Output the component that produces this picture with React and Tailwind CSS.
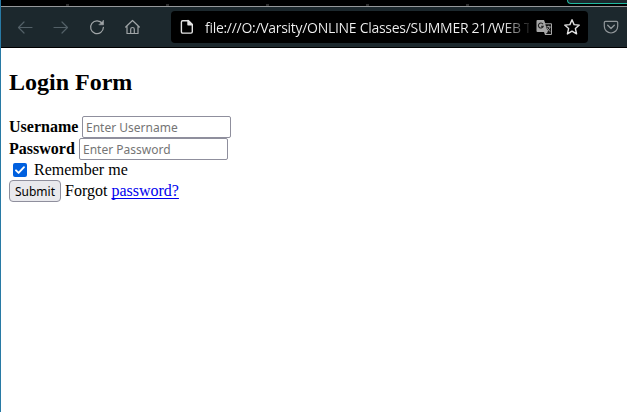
import React from "react";

function NavIcon({ children, className }) {
  return (
    <svg width="18" height="18" viewBox="0 0 18 18" fill="none" stroke="currentColor" strokeWidth="1.2" strokeLinecap="round" strokeLinejoin="round" className={`shrink-0 ${className}`}>
      {children}
    </svg>
  );
}

function Toolbar() {
  return (
    <div className="flex h-[40px] items-center bg-[#1c282d] font-['Open_Sans',sans-serif]">
      <NavIcon className="ml-[15px] text-[#536067]">
        <path d="M16 9.500H2.500M8 4 2.500 9.500 8 15" />
      </NavIcon>
      <NavIcon className="ml-[18px] text-[#536067]">
        <path d="M2 9.500h13.500M10 4l5.500 5.500L10 15" />
      </NavIcon>
      <NavIcon className="ml-[18px] text-[#a0a5a7]">
        <path d="M14.300 5.700A6.400 6.400 0 1 0 15.400 9.300" />
        <path d="M15.500 2.500v4.300h-4.300z" fill="currentColor" strokeWidth="0.6" />
      </NavIcon>
      <NavIcon className="ml-[18px] text-[#a0a5a7]">
        <path d="M1.700 9 8.500 2.500 15.300 9M3 8v7.500h11V8M6.700 15.500v-4.300c0-1.200.7-1.700 1.800-1.700s1.800.5 1.800 1.700v4.300" />
      </NavIcon>
      <div className="ml-[29px] flex h-8 w-[417px] shrink-0 items-center rounded bg-black">
        <svg width="14" height="16" viewBox="0 0 14 16" fill="none" stroke="#e4e4e4" strokeWidth="1.4" strokeLinejoin="round" className="ml-[9px] shrink-0">
          <path d="M2.700 1.700h5.800L12.300 5.500v7.300c0 .8-.5 1.300-1.300 1.300H2.700c-.8 0-1.300-.5-1.300-1.300V3c0-.8.500-1.300 1.300-1.300z" />
          <path d="M8 1.500v4.300h4.300z" fill="#e4e4e4" />
        </svg>
        <div className="mt-[2px] ml-[11px] w-[324px] shrink-0 bg-gradient-to-r from-[#f2f2f2] from-92% to-[#222222] to-100% bg-clip-text text-[14px] leading-5 tracking-[-0.29px] whitespace-nowrap text-transparent">
          file:///O:/Varsity/ONLINE Classes/SUMMER 21/WEB T
        </div>
        <svg width="17" height="17" viewBox="0 0 17 17" className="ml-[7px] shrink-0">
          <path d="M1.500 1H8l1.200 3.300H15a1 1 0 0 1 1 1v9.700a1 1 0 0 1-1 1H9l-1-3H1.500a1 1 0 0 1-1-1V2a1 1 0 0 1 1-1z" fill="#a7a7a7" />
          <path d="M9.300 5.200H15v9.900H9.800l2-2.200z" fill="#101010" />
          <path d="M7 5.200A2.500 2.500 0 1 0 7.300 7.200H5" fill="none" stroke="#222" strokeWidth="1.1" />
          <path d="M10.500 7.800h4M12.500 6.800v1M14 8c-.4 2-1.500 3-3 4M11.300 9.200c.7 1.500 1.600 2.500 3 3" fill="none" stroke="#aaa" />
        </svg>
        <svg width="18" height="18" viewBox="0 0 18 18" fill="none" stroke="#e2e2e2" strokeWidth="1.4" strokeLinejoin="round" className="ml-[10px] shrink-0">
          <path d="m9 1.700 2.100 4.900 5.200.5-3.900 3.500 1.200 5.300L9 13.100l-4.600 2.800 1.200-5.300-3.900-3.500 5.200-.5z" />
        </svg>
      </div>
      <svg width="16" height="16" viewBox="0 0 16 16" fill="none" stroke="#909699" strokeWidth="1.2" strokeLinecap="round" strokeLinejoin="round" className="ml-[15px] shrink-0">
        <path d="M2.500 2.300h11c.7 0 1.200.5 1.200 1.200v3.800a6.700 6.700 0 0 1-13.400 0V3.500c0-.7.500-1.200 1.200-1.200z" />
        <path d="m4.700 6.300 3.300 3.200 3.300-3.200" strokeWidth="1.400" />
      </svg>
    </div>
  );
}

const fieldClass =
  "h-[22px] w-[149px] rounded-[2px] border border-[#8f8f9d] bg-white pt-px pl-[3px] font-['Noto_Sans',sans-serif] text-[12px] text-black outline-none placeholder:text-[#757575]";

export default function App() {
  return (
    <div className="h-[412px] w-[627px] overflow-hidden border-l border-[#287aa5] bg-white font-['Liberation_Serif',serif] text-[16px] text-black">
      <div>
        <div className="flex h-[6px] items-start bg-black">
          <div className="flex w-[566px] gap-[97px] self-end pl-[65px]">
            {[0, 1, 2, 3, 4].map((mark) => (
              <span key={mark} className="h-[2px] w-[3px] shrink-0 bg-[#303030]" />
            ))}
          </div>
          <div className="h-1 w-[60px] rounded-bl-[4px] border-b border-l border-[#20b9a0] bg-[#1c282d]" />
        </div>
        <div className="h-px bg-[#96989a]" />
        <Toolbar />
        <div className="h-px bg-black" />
      </div>
      <form className="pl-2" onSubmit={(e) => e.preventDefault()}>
        <h2 className="mt-5 text-[24px] leading-[28px] font-bold">Login Form</h2>
        <div className="mt-5 flex h-[22px] items-center">
          <label className="w-[73px] font-bold whitespace-nowrap" htmlFor="username">Username</label>
          <input id="username" placeholder="Enter Username" className={fieldClass} />
        </div>
        <div className="flex h-[22px] items-center">
          <label className="w-[70px] font-bold whitespace-nowrap" htmlFor="password">Password</label>
          <input id="password" type="password" placeholder="Enter Password" className={fieldClass} />
        </div>
        <label className="flex h-5 items-center">
          <span className="ml-1 flex h-[14px] w-[14px] items-center justify-center rounded-[2px] bg-[#0060df]">
            <svg width="12" height="12" viewBox="0 0 12 12" fill="none" stroke="white" strokeWidth="1.900" strokeLinecap="round" strokeLinejoin="round">
              <path d="m2 6.300 2.600 2.600L10 3.200" />
            </svg>
          </span>
          <span className="ml-[7px]">Remember me</span>
        </label>
        <div className="flex h-[22px] items-center">
          <button className="h-[22px] w-[52px] rounded-[4px] border border-[#8f8f9d] bg-[#e9e9ed] pt-px font-['Noto_Sans',sans-serif] text-[12px] leading-5">Submit</button>
          <span className="ml-1">
            Forgot <a href="#" className="text-[#0000ee] underline decoration-1 underline-offset-2 [text-decoration-skip-ink:none]">password?</a>
          </span>
        </div>
      </form>
    </div>
  );
}
